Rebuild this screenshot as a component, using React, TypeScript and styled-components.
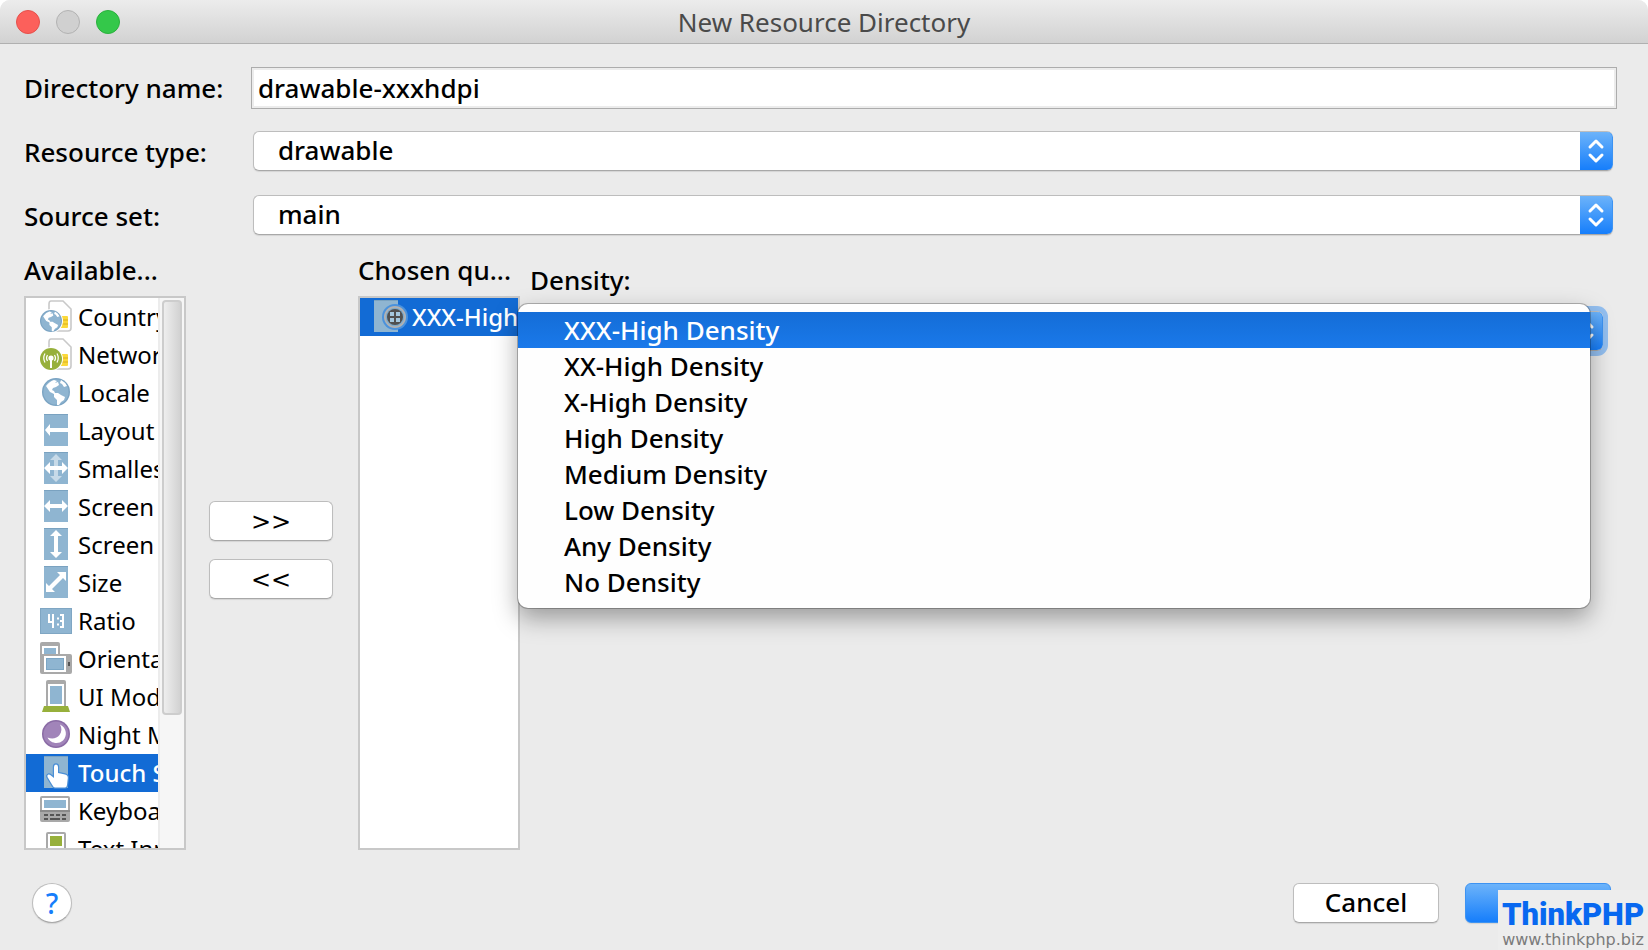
import React from "react";
import styled, { createGlobalStyle, css } from "styled-components";

const GlobalStyle = createGlobalStyle`
  *, *::before, *::after { box-sizing: border-box; }
  html, body { margin: 0; background: #fff; }
  body, button, input, select {
    font-family: "Noto Sans", "Open Sans", sans-serif;
    font-size: 26px;
    font-weight: 500;
    line-height: 36px;
    color: #000;
  }
`;

const Window = styled.div`
  display: flex;
  flex-direction: column;
  min-height: 100vh;
  background: #ebebeb;
  border-radius: 10px 10px 0 0;
  overflow: hidden;
  position: relative;
`;

const TitleBar = styled.header`
  display: grid;
  grid-template-columns: 1fr auto 1fr;
  align-items: center;
  height: 44px;
  padding: 0 16px;
  background: linear-gradient(#ececec, #d2d2d2);
  border-bottom: 1px solid #b0b0b0;
`;

const Lights = styled.div`
  display: flex;
  gap: 16px;
`;

const Light = styled.button<{ $fill: string; $edge: string }>`
  width: 24px;
  height: 24px;
  padding: 0;
  border-radius: 50%;
  border: 1px solid ${(p) => p.$edge};
  background: ${(p) => p.$fill};
`;

const Title = styled.h1`
  margin: 0;
  font-size: 26px;
  font-weight: 400;
  color: #4a4a4a;
`;

const Body = styled.main`
  display: flex;
  flex-direction: column;
  flex: 1;
  padding: 20px 31px 0 24px;
`;

const Fields = styled.div`
  display: grid;
  gap: 16px;
  padding-bottom: 12px;
`;

const Field = styled.div`
  display: grid;
  grid-template-columns: 227px 1fr;
  align-items: center;
  height: 48px;
`;

const NameInput = styled.input`
  width: 100%;
  height: 42px;
  padding: 0 6px;
  border: 1px solid #acacac;
  outline: none;
  background: #fff;
  box-shadow: inset 0 0 0 2px #ececec;
`;

const ComboBox = styled.div<{ $focused?: boolean }>`
  display: flex;
  height: 40px;
  margin: 0 4px 2px 2px;
  border: 1px solid #bdbdbd;
  border-bottom-color: #a8a8a8;
  border-right: 0;
  border-radius: 6px;
  background: #fff;
  overflow: hidden;
  box-shadow: ${(p) => (p.$focused ? "0 0 0 5px #93bff0" : "0 1px 1px #d4d4d4")};
`;

const Select = styled.select`
  flex: 1;
  min-width: 0;
  padding: 0 24px 2px;
  border: 0;
  outline: none;
  background: transparent;
  appearance: none;
`;

const Stepper = styled.span`
  display: flex;
  align-items: center;
  justify-content: center;
  width: 33px;
  margin: -1px 0;
  border: 1px solid #3d93f2;
  border-left: 0;
  border-radius: 0 6px 6px 0;
  background: linear-gradient(#6cb3fa, #167efb);
`;

const Panels = styled.div`
  display: flex;
  flex: 1;
`;

const Column = styled.section`
  display: flex;
  flex-direction: column;
  width: 162px;
`;

const ColumnLabel = styled.div`
  height: 44px;
  white-space: nowrap;
`;

const ListFrame = styled.div`
  display: flex;
  flex: 1 1 0;
  min-height: 200px;
  border: 2px solid #c8c8c8;
  background: #fff;
  overflow: hidden;
`;

const List = styled.ul`
  flex: 1;
  min-width: 0;
  height: 0;
  margin: 0;
  padding: 0;
  list-style: none;
`;

const ListClip = styled.div`
  display: flex;
  flex: 1;
  min-width: 0;
  overflow: hidden;
`;

const Item = styled.li<{ $selected?: boolean; $indent: number }>`
  display: flex;
  gap: 6px;
  height: 38px;
  padding: 2px 0 0 ${(p) => p.$indent}px;
  font-size: 24px;
  font-weight: 400;
  line-height: 34px;
  white-space: nowrap;
  overflow: hidden;
  ${(p) =>
    p.$selected &&
    css`
      background: #126bd5;
      color: #fff;
      font-weight: 500;
    `}
`;

const Icon = styled.svg`
  flex: none;
  overflow: visible;
`;

const ScrollTrack = styled.div`
  width: 26px;
  padding: 2px;
  border-left: 2px solid #ececec;
  background: #f6f6f6;
`;

const ScrollThumb = styled.div`
  height: 76%;
  border: 2px solid #cdcdcd;
  border-radius: 4px;
  background: linear-gradient(90deg, #eeeeee, #d2d2d2);
`;

const Movers = styled.div`
  display: flex;
  flex-direction: column;
  justify-content: center;
  gap: 18px;
  width: 172px;
  padding: 0 25px 2px 23px;
`;

const pushFace = css`
  border: 1px solid #bdbdbd;
  border-bottom-color: #a8a8a8;
  background: #fff;
  box-shadow: 0 1px 1px #d4d4d4;
`;

const PushButton = styled.button`
  height: 40px;
  padding: 0 0 2px;
  border-radius: 6px;
  ${pushFace}
`;

const MoveButton = styled(PushButton)`
  padding: 2px 0 0;
  font-family: "DejaVu Sans", sans-serif;
  font-size: 24px;
`;

const DensityPanel = styled.section`
  flex: 1;
  min-width: 0;
  padding: 10px 10px 0 10px;
`;

const DensityLabel = styled.label`
  display: block;
  height: 49px;
`;

const DensityField = styled.div`
  position: relative;
`;

const Popup = styled.ul`
  position: absolute;
  top: -7px;
  left: -12px;
  right: 17px;
  margin: 0;
  padding: 8px 0;
  list-style: none;
  border-radius: 10px;
  background: #fefefe;
  box-shadow: 0 0 0 1px rgba(0, 0, 0, 0.25), 0 10px 24px rgba(0, 0, 0, 0.35);
`;

const Option = styled.li<{ $selected?: boolean }>`
  height: 36px;
  padding-left: 46px;
  ${(p) =>
    p.$selected &&
    css`
      background: linear-gradient(#146dd7, #1a79ea);
      color: #fff;
    `}
`;

const Footer = styled.footer`
  display: flex;
  align-items: center;
  gap: 26px;
  height: 100px;
  padding: 6px 37px 0 32px;
`;

const HelpButton = styled.button`
  width: 40px;
  height: 40px;
  padding: 0;
  margin-right: auto;
  border-radius: 50%;
  font-size: 28px;
  color: #167efb;
  ${pushFace}
`;

const DialogButton = styled(PushButton)<{ $primary?: boolean }>`
  width: 146px;
  ${(p) =>
    p.$primary &&
    css`
      border-color: #3d93f2;
      background: linear-gradient(#6cb3fa, #167efb);
    `}
`;

const Watermark = styled.aside`
  position: absolute;
  right: 0;
  bottom: 0;
  width: 150px;
  height: 60px;
  padding-top: 8px;
  background: #ededed;
  text-align: center;
  white-space: nowrap;
`;

const Brand = styled.div`
  font-family: "Roboto", sans-serif;
  font-weight: 900;
  font-size: 31px;
  line-height: 34px;
  color: #0868f0;
`;

const Site = styled.div`
  font-family: "DejaVu Sans", sans-serif;
  font-size: 16px;
  line-height: 16px;
  color: #7b7b7b;
`;

const BLUE = "#8fb5d1";

const Chevrons = () => (
  <Icon width="16" height="26" viewBox="0 0 16 26" fill="none" stroke="#fff" strokeWidth="3" strokeLinecap="round" strokeLinejoin="round" aria-hidden="true">
    <path d="M2 9 8 3l6 6M2 17l6 6 6-6" />
  </Icon>
);

const Globe = ({ cx, cy, r }: { cx: number; cy: number; r: number }) => (
  <g transform={`translate(${cx} ${cy}) scale(${r / 14})`}>
    <circle r="14" fill="#7ba4c3" />
    <circle r="12.6" fill={BLUE} />
    <path
      fill="#fff"
      d="M-10-6Q-6-11-2-12L1-11-1-9 2-10 3-7 0-5-3-4-4-2-2-1-1 1 2 1 5 3 9 5 8 8 5 10 3 13 1 13 1 8-2 5-2 2-6 0-8-3ZM5-12Q9-10 11-6L8-5 6-8 4-9Z"
    />
  </g>
);

const SimCard = () => (
  <>
    <path d="M11 1H23L31 9V28q0 3-3 3H12q-3 0-3-3V4q0-3 2-3Z" fill="#fff" stroke="#c9c9c9" strokeWidth="1.6" />
    <rect x="19" y="16" width="9" height="12" rx="1" fill="#fbd93b" />
    <path d="M22 20h6M22 24h6" stroke="#d9ae1c" strokeWidth="1" />
  </>
);

const Plate = () => (
  <>
    <rect x="4" width="24" height="32" fill={BLUE} />
    <rect x="4" width="24" height="1" fill="#7aa2c0" />
  </>
);

const HArrow = () => <path d="M4 16 10 10V14H22V10L28 16 22 22V18H10V22Z" fill="#fff" />;
const VArrow = ({ o = 1 }: { o?: number }) => (
  <path d="M16 2 22 8H18V24H22L16 30 10 24H14V8H10Z" fill="#fff" opacity={o} />
);

const icons: Record<string, React.ReactNode> = {
  country: (
    <>
      <SimCard />
      <circle cx="11" cy="21" r="12" fill="#fff" />
      <Globe cx={11} cy={21} r={11} />
    </>
  ),
  network: (
    <>
      <SimCard />
      <circle cx="11" cy="21" r="12" fill="#fff" />
      <circle cx="11" cy="21" r="11" fill="#97b03b" />
      <circle cx="11" cy="20" r="2.6" fill="#fff" />
      <path d="M11 21v9" stroke="#fff" strokeWidth="2" />
      <path d="M7.500 17q-2 3 0 6M14.500 17q2 3 0 6M5 15.500q-2.500 4.500 0 9M17 15.500q2.500 4.500 0 9" stroke="#fff" strokeWidth="1.200" fill="none" />
    </>
  ),
  locale: <Globe cx={16} cy={16} r={14} />,
  layout: (
    <>
      <Plate />
      <path d="M5 16 10 10V14H28V18H10V22Z" fill="#fff" />
    </>
  ),
  smallest: (
    <>
      <Plate />
      <VArrow o={0.5} />
      <HArrow />
    </>
  ),
  width: (
    <>
      <Plate />
      <HArrow />
    </>
  ),
  height: (
    <>
      <Plate />
      <VArrow />
    </>
  ),
  size: (
    <>
      <Plate />
      <path d="M26 6V15L23 12 12 23 15 26H6V17L9 20 20 9 17 6Z" fill="#fff" />
    </>
  ),
  ratio: (
    <>
      <rect y="4" width="32" height="26" fill={BLUE} />
      <rect x=".5" y="4.500" width="31" height="25" fill="none" stroke="#7fa6c3" />
      <path d="M9 10v8h5M13 10v14M17 14.500h2M17 20.500h2M20 11h3v12h-3M20 17h3" fill="none" stroke="#fff" strokeWidth="2" />
    </>
  ),
  orientation: (
    <>
      <rect width="20" height="18" rx="2" fill="#a9a9a9" />
      <path d="M2 4h16v12H2z" fill="#fff" />
      <path d="M4 6h12v8H4z" fill={BLUE} />
      <rect y="12" width="32" height="20" rx="2" fill="#a9a9a9" />
      <path d="M4 14h22v16H4z" fill="#fff" />
      <path d="M6 16h18v12H6z" fill="#7ba6c5" />
      <path d="M7 17h16v10H7z" fill={BLUE} />
      <rect x="28" y="20" width="2" height="4" fill="#555" />
    </>
  ),
  uimode: (
    <>
      <path d="M6 26V2q0-2 2-2h16q2 0 2 2v24Z" fill="#a9a9a9" />
      <path d="M8 4h16v22H8z" fill="#fff" />
      <path d="M10 6h12v18H10z" fill={BLUE} />
      <path d="M4 26h24l2 6H2Z" fill="#97b03b" />
    </>
  ),
  night: (
    <>
      <circle cx="16" cy="16" r="14" fill="#8a6ba5" />
      <circle cx="16" cy="16" r="12.500" fill="#a184b9" />
      <path d="M20 6.500C27 10 27.500 18 23 22.500 18 27 10 25 7.500 19.500 12 21.500 17 20.500 19.500 17 22 13.500 22 10 20 6.500Z" fill="#fff" />
    </>
  ),
  touch: (
    <>
      <Plate />
      <path
        d="M14 11q0-2.500 2-2.500t2 2.500v6l7 1.500q3 .7 2.800 3.500L27 29q-.4 2.500-2 2.500H15q-1.500 0-3-3l-4.500-7.500q-.8-1.800 1-2.500 1.500-.4 3 1.500L14 22Z"
        fill="#fff"
        stroke="#4b8fd6"
        strokeWidth="2.400"
        paintOrder="stroke"
      />
    </>
  ),
  keyboard: (
    <>
      <rect y="2" width="30" height="26" rx="2" fill="#a9a9a9" />
      <path d="M2 4h26v12H2z" fill="#fff" />
      <path d="M4 6h22v8H4z" fill={BLUE} />
      <path d="M0 16h30v2H0z" fill="#8a8a8a" />
      <path d="M4 21h22" stroke="#555" strokeWidth="2" strokeDasharray="4 2" />
      <path d="M4 25h4M10 25h10M22 25h4" stroke="#555" strokeWidth="2" />
    </>
  ),
  textinput: (
    <>
      <path d="M6 32V2q0-2 2-2h16q2 0 2 2v30Z" fill="#a9a9a9" />
      <path d="M8 2h16v30H8z" fill="#fff" />
      <path d="M10 4h12v10H10z" fill="#97b03b" />
    </>
  ),
  density: (
    <>
      <Plate />
      <circle cx="25" cy="17" r="13" fill="#4b92dc" />
      <circle cx="25" cy="17" r="11" fill="#b2b2b2" />
      <circle cx="25" cy="17" r="9.300" fill="#7ea9c9" />
      <circle cx="25" cy="17" r="8" fill="#505050" />
      <path d="M20 12h4v4h-4zM26 12h4v4h-4zM20 18h4v4h-4zM26 18h4v4h-4z" fill="#a5c8df" />
    </>
  ),
};

const available = [
  ["country", "Country"],
  ["network", "Network"],
  ["locale", "Locale"],
  ["layout", "Layout"],
  ["smallest", "Smallest"],
  ["width", "Screen"],
  ["height", "Screen"],
  ["size", "Size"],
  ["ratio", "Ratio"],
  ["orientation", "Orientation"],
  ["uimode", "UI Mode"],
  ["night", "Night Mode"],
  ["touch", "Touch Screen"],
  ["keyboard", "Keyboard"],
  ["textinput", "Text Input"],
];

const densities = [
  "XXX-High Density",
  "XX-High Density",
  "X-High Density",
  "High Density",
  "Medium Density",
  "Low Density",
  "Any Density",
  "No Density",
];

const Combo = ({ id, value, focused }: { id: string; value?: string; focused?: boolean }) => (
  <ComboBox $focused={focused}>
    <Select id={id} defaultValue={value}>
      <option>{value}</option>
    </Select>
    <Stepper>
      <Chevrons />
    </Stepper>
  </ComboBox>
);

export default function App() {
  return (
    <>
      <GlobalStyle />
      <Window>
        <TitleBar>
          <Lights>
            <Light aria-label="Close" $fill="#fc605b" $edge="#e5504b" />
            <Light aria-label="Minimize" $fill="#d0d0d0" $edge="#b2b2b2" />
            <Light aria-label="Zoom" $fill="#34c84a" $edge="#2ab03d" />
          </Lights>
          <Title>New Resource Directory</Title>
        </TitleBar>
        <Body>
          <Fields>
            <Field>
              <label htmlFor="dir">Directory name:</label>
              <NameInput id="dir" defaultValue="drawable-xxxhdpi" />
            </Field>
            <Field>
              <label htmlFor="type">Resource type:</label>
              <Combo id="type" value="drawable" />
            </Field>
            <Field>
              <label htmlFor="set">Source set:</label>
              <Combo id="set" value="main" />
            </Field>
          </Fields>
          <Panels>
            <Column>
              <ColumnLabel id="available">Available...</ColumnLabel>
              <ListFrame>
                <ListClip>
                  <List role="listbox" aria-labelledby="available">
                    {available.map(([icon, name]) => (
                      <Item key={icon} role="option" aria-selected={icon === "touch"} $selected={icon === "touch"} $indent={14}>
                        <Icon width="32" height="32" viewBox="0 0 32 32" aria-hidden="true">
                          {icons[icon]}
                        </Icon>
                        {name}
                      </Item>
                    ))}
                  </List>
                </ListClip>
                <ScrollTrack>
                  <ScrollThumb />
                </ScrollTrack>
              </ListFrame>
            </Column>
            <Movers>
              <MoveButton>&gt;&gt;</MoveButton>
              <MoveButton>&lt;&lt;</MoveButton>
            </Movers>
            <Column>
              <ColumnLabel id="chosen">Chosen qu...</ColumnLabel>
              <ListFrame>
                <ListClip>
                  <List role="listbox" aria-labelledby="chosen">
                    <Item role="option" aria-selected $selected $indent={10}>
                      <Icon width="36" height="32" viewBox="0 0 36 32" aria-hidden="true">
                        {icons.density}
                      </Icon>
                      XXX-High
                    </Item>
                  </List>
                </ListClip>
              </ListFrame>
            </Column>
            <DensityPanel>
              <DensityLabel htmlFor="density">Density:</DensityLabel>
              <DensityField>
                <Combo id="density" focused />
                <Popup role="listbox" aria-label="Density">
                  {densities.map((d, i) => (
                    <Option key={d} role="option" aria-selected={i === 0} $selected={i === 0}>
                      {d}
                    </Option>
                  ))}
                </Popup>
              </DensityField>
            </DensityPanel>
          </Panels>
        </Body>
        <Footer>
          <HelpButton aria-label="Help">?</HelpButton>
          <DialogButton>Cancel</DialogButton>
          <DialogButton $primary aria-label="OK" />
        </Footer>
        <Watermark>
          <Brand>ThinkPHP</Brand>
          <Site>www.thinkphp.biz</Site>
        </Watermark>
      </Window>
    </>
  );
}
